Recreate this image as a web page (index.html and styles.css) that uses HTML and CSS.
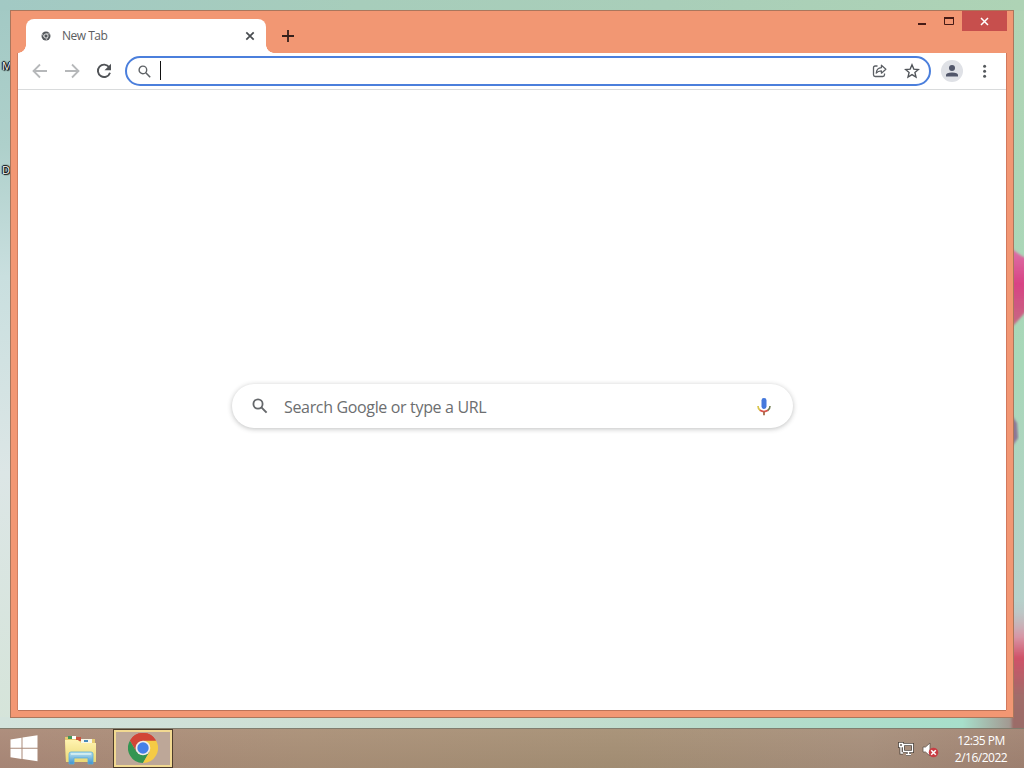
FILE: index.html
```html
<!DOCTYPE html>
<html lang="en">
<head>
<meta charset="utf-8">
<title>New Tab</title>
<link rel="stylesheet" href="styles.css">
</head>
<body>
<div class="desktop">
  <svg class="wallpaper" width="1024" height="728" viewBox="0 0 1024 728">
    <defs>
      <linearGradient id="petal" x1="0" y1="0" x2="0" y2="1"><stop offset="0" stop-color="#dc74aa"/><stop offset=".45" stop-color="#d84385"/><stop offset="1" stop-color="#c36e82"/></linearGradient>
      <linearGradient id="bloom" x1="0" y1="0" x2="0" y2="1"><stop offset="0" stop-color="#b9d0cf" stop-opacity="0"/><stop offset=".3" stop-color="#d895a5"/><stop offset=".45" stop-color="#cf5269"/><stop offset=".72" stop-color="#a16d6a"/><stop offset="1" stop-color="#996c66"/></linearGradient>
      <filter id="soft"><feGaussianBlur stdDeviation="1.2"/></filter>
    </defs>
    <path d="M1010 247 Q1020 256 1028 259 V309 Q1019 320 1010 329Z" fill="url(#petal)" filter="url(#soft)"/>
    <path d="M1011 414 L1017 423 L1018 438 L1011 448Z" fill="#8c7794" filter="url(#soft)"/>
    <path d="M1010 595 H1030 V735 H1012Z" fill="url(#bloom)" filter="url(#soft)"/>
  </svg>
  <span class="shortcut first">M</span>
  <span class="shortcut second">D</span>

  <main class="window">
    <header class="titlebar">
      <div class="tab">
        <svg class="favicon" width="10" height="10" viewBox="0 0 10 10"><circle cx="5" cy="5" r="4.5" fill="#54585c"/><circle cx="5" cy="5" r="2.1" fill="none" stroke="#eee" stroke-width=".9"/><path d="M5 2.9h4M3.1 6L1.3 2.9M6.8 6.1L5 9.2" stroke="#ddd" stroke-width=".7"/></svg>
        <span class="tab-title">New Tab</span>
        <svg class="tab-close" width="10" height="10" viewBox="0 0 10 10"><path d="M1.3 1.3l7.4 7.4M8.7 1.3L1.3 8.7" stroke="#484c50" stroke-width="1.7"/></svg>
      </div>
      <svg class="new-tab" width="12" height="12" viewBox="0 0 12 12"><path d="M6 0v12M0 6h12" stroke="#35201b" stroke-width="1.8"/></svg>
      <div class="controls">
        <svg width="54" height="20" viewBox="0 0 54 20"><path d="M10 13h8" stroke="#461b16" stroke-width="2"/><path d="M36.5 6.5h9v7h-9z" fill="none" stroke="#461b16"/><path d="M36 7h10" stroke="#461b16" stroke-width="2"/></svg>
        <div class="close"><svg width="9" height="9" viewBox="0 0 9 9"><path d="M1 1l7 7M8 1L1 8" stroke="#fff" stroke-width="1.5"/></svg></div>
      </div>
    </header>

    <section class="page">
      <nav class="toolbar">
        <svg class="nav" width="16" height="16" viewBox="0 0 16 16"><path d="M15 8H2M8 1.5L1.5 8 8 14.5" fill="none" stroke="#b6b8ba" stroke-width="1.8"/></svg>
        <svg class="nav" width="16" height="16" viewBox="0 0 16 16"><path d="M1 8h13M8 1.5L14.5 8 8 14.5" fill="none" stroke="#b6b8ba" stroke-width="1.8"/></svg>
        <svg class="nav" width="16" height="16" viewBox="0 0 16 16"><path d="M13.2 4.3A6.2 6.2 0 1 0 14 9.7" fill="none" stroke="#505357" stroke-width="1.9"/><path d="M15 .8v6.5H8.5z" fill="#505357"/></svg>
        <div class="address">
          <svg class="lens" width="13" height="13" viewBox="0 0 13 13"><circle cx="4.9" cy="4.9" r="3.8" fill="none" stroke="#5e6266" stroke-width="1.4"/><path d="M7.8 7.8l4.4 4.4" stroke="#5e6266" stroke-width="1.6"/></svg>
          <span class="caret"></span>
          <svg class="share" width="16" height="14" viewBox="0 0 16 14"><path d="M5.5 2H3.2Q1.5 2 1.5 3.7v7.1q0 1.7 1.7 1.7h7.6q1.7 0 1.7-1.7V9.5" fill="none" stroke="#5b5f64" stroke-width="1.3"/><path d="M4.2 9.2Q4.7 4 9.4 3.7V1.2l4.5 4-4.5 4V6.8Q6.2 6.7 4.2 9.2z" fill="none" stroke="#5b5f64" stroke-width="1.2" stroke-linejoin="round"/></svg>
          <svg class="star" width="16" height="16" viewBox="0 0 16 16"><path d="M8 1.8l1.8 4.3 4.6.4-3.5 3 1.1 4.6-4-2.5-4 2.5 1.1-4.6-3.5-3 4.6-.4z" fill="none" stroke="#505459" stroke-width="1.35"/></svg>
        </div>
        <svg class="avatar" width="22" height="22" viewBox="0 0 22 22"><circle cx="11" cy="11" r="11" fill="#dfe1e6"/><circle cx="11" cy="8" r="3" fill="#51566a"/><path d="M5 16.5v-1.4Q5 12.5 11 12.5t6 2.6v1.4z" fill="#51566a"/></svg>
        <svg class="menu" width="6" height="16" viewBox="0 0 6 16"><g fill="#55595d"><circle cx="2.6" cy="3.3" r="1.5"/><circle cx="2.6" cy="8.3" r="1.5"/><circle cx="2.6" cy="13.3" r="1.5"/></g></svg>
      </nav>
      <div class="content">
        <div class="search">
          <svg width="16" height="16" viewBox="0 0 16 16"><circle cx="6" cy="6" r="4.6" fill="none" stroke="#65686b" stroke-width="1.8"/><path d="M9.4 9.4l5.2 5.2" stroke="#65686b" stroke-width="2"/></svg>
          <span class="prompt">Search Google or type a URL</span>
          <svg class="mic" width="14" height="18" viewBox="0 0 14 18"><rect x="4.5" y="0" width="5" height="11" rx="2.4" fill="#4679dc"/><path d="M1 8q0 3 2.3 4.5" fill="none" stroke="#d8c449" stroke-width="1.7"/><path d="M3 12.3q4 2.6 8 0" fill="none" stroke="#dc514a" stroke-width="1.7"/><path d="M13 8q0 3-2.3 4.5" fill="none" stroke="#6f7b50" stroke-width="1.6"/><path d="M7 13.5v3.7" stroke="#a36b49" stroke-width="1.8"/></svg>
        </div>
      </div>
    </section>
  </main>
</div>

<footer class="taskbar">
  <svg class="start" width="28" height="27" viewBox="0 0 28 27"><path d="M0.5 4.5l11-1.7v10h-11zM12.5 2.6L27.5 .3v12.5h-15zM.5 13.8h11v10.1L.5 22.2zM12.5 13.8h15v12.4l-15-2.1z" fill="#fff"/></svg>
  <svg class="explorer" width="34" height="30" viewBox="0 0 34 30">
    <defs><linearGradient id="folder" x1="0" y1="0" x2="0" y2="1"><stop offset="0" stop-color="#fff3b0"/><stop offset="1" stop-color="#ead875"/></linearGradient><linearGradient id="stand" x1="0" y1="0" x2="0" y2="1"><stop offset="0" stop-color="#c1e5ef"/><stop offset="1" stop-color="#3c92d0"/></linearGradient></defs>
    <path d="M1 2h11l2 2h17v23H2z" fill="#e6cb70"/><path d="M4 1h4v3H4z" fill="#439658"/><path d="M8 1h4v3H8z" fill="#fff"/><path d="M12 2h5v4h-5z" fill="#c8543f"/><path d="M17 4h11v4H17z" fill="#f8f7e8"/><path d="M20 5h4v2h-4z" fill="#4889b9"/>
    <path d="M1 5h13l3 3h15v19H2z" fill="url(#folder)"/>
    <path d="M5 29V19q0-2 2-2h20q2 0 2 2v10h-5v-6H10v6z" fill="url(#stand)" stroke="#5aaedb" stroke-width=".8"/><path d="M7 19h20" stroke="#e8f8f4" stroke-width="1.2"/>
  </svg>
  <div class="task">
    <svg width="30" height="30" viewBox="0 0 30 30"><path d="M2 7.5A15 15 0 0 1 28 7.5L15 15z" fill="#d14537"/><path d="M2 7.5A15 15 0 0 0 15 30l6.5-11.2L8.5 18.7z" fill="#349552"/><path d="M28 7.5A15 15 0 0 1 15 30l6.5-11.2Q23.5 12 15 7.5z" fill="#f5cb45"/><path d="M2 7.5A15 15 0 0 1 28 7.5H15a7.5 7.5 0 0 0-6.5 11.2z" fill="#d14537"/><circle cx="15" cy="15" r="7.3" fill="#f5eee8"/><circle cx="15" cy="15" r="5.7" fill="#4680e8"/></svg>
  </div>
  <div class="tray">
    <svg class="network" width="17" height="16" viewBox="0 0 17 16"><g fill="none" stroke="#4e443c" stroke-width="3"><path d="M5.5 3.5h9v7h-9zM8 13.5h5M10.5 11v2M1.5 2.5h3v3h-3zM3 6v6h2"/></g><g fill="none" stroke="#fff" stroke-width="1.3"><path d="M5.5 3.5h9v7h-9zM8 13.5h5M10.5 11v2M1.5 2.5h3v3h-3zM3 6v6h2"/></g></svg>
    <svg class="volume" width="17" height="16" viewBox="0 0 17 16"><path d="M1 5h2.5L8 1v13L3.5 10H1z" fill="#fff" stroke="#62564c" stroke-width=".8"/><circle cx="11.5" cy="10.5" r="4.8" fill="#c83d43"/><path d="M9.2 8.2l4.6 4.6M13.8 8.2l-4.6 4.6" stroke="#fff" stroke-width="1.5"/></svg>
    <div class="clock"><span class="time">12:35 PM</span><span class="date">2/16/2022</span></div>
  </div>
</footer>
</body>
</html>
```
FILE: styles.css
```css
* { box-sizing: border-box; }
body { margin: 0; width: 1024px; height: 768px; overflow: hidden; display: flex; flex-direction: column; font-family: "Open Sans", "Noto Sans", sans-serif; }
svg { display: block; flex: none; }
.desktop {
  position: relative;
  height: 728px;
  overflow: hidden;
  background:
    linear-gradient(90deg, #d3e3dc 0, #c8ddcf 50%, #b4dccb 75%, #a7dfcb 94%, #a18480 100%) 0 717px / 1024px 11px no-repeat,
    linear-gradient(90deg, #a2c9c4, #a7cdbb 35%, #a9ceb9 65%, #aed3b5) 0 0 / 1024px 11px no-repeat,
    linear-gradient(180deg, #b1d4b5, #a8d8b9 50%, #b6d1c9 80%, #b9cfd3) 1012px 0 / 12px 728px no-repeat,
    linear-gradient(180deg, #a2c9c4 0, #aed0cb 20%, #c9dfdf 38%, #dce6e6 65%, #d5e4d9 100%);
}
.wallpaper { position: absolute; left: 0; top: 0; }
.shortcut { position: absolute; left: 2px; font-size: 11px; line-height: 14px; color: #fff; text-shadow: 0 0 1px #000, 1px 1px 1px #000, 1px 0 2px #000, -1px 0 1px #000, 0 -1px 1px #000; }
.first { top: 59px; }
.second { top: 163px; }
.window { position: absolute; left: 10px; top: 10px; width: 1004px; height: 708px; padding: 0 7px 7px; border: 1px solid #aa765c; background: #f29773; display: flex; flex-direction: column; }
.titlebar { position: relative; z-index: 1; display: flex; height: 42px; padding-left: 8px; }
.tab { position: relative; width: 240px; height: 34px; margin-top: 8px; padding: 0 11px 0 15px; border-radius: 8px 8px 0 0; background: #fff; display: flex; align-items: center; }
.tab::before, .tab::after { content: ""; position: absolute; bottom: 0; width: 8px; height: 8px; }
.tab::before { left: -8px; background: radial-gradient(circle at 0 0, transparent 7.5px, #fff 8px); }
.tab::after { right: -8px; background: radial-gradient(circle at 100% 0, transparent 7.5px, #fff 8px); }
.tab-title { margin-left: 11px; font-size: 12px; line-height: 16px; letter-spacing: -0.5px; color: #5b5d60; }
.tab-close { margin-left: auto; }
.new-tab { margin: 19px 0 0 16px; }
.controls { display: flex; margin: 0 -1px 0 auto; height: 20px; }
.close { width: 45px; height: 20px; background: #c74f4d; display: flex; align-items: center; justify-content: center; }
.page { flex: 1; background: #fff; box-shadow: -1px 0 #d07f61, 1px 0 #d2795e, 0 1px #bd7358; display: flex; flex-direction: column; }
.toolbar { height: 37px; border-bottom: 1px solid #d9dbdc; display: flex; align-items: center; padding: 0 18px 0 14px; }
.nav { margin-right: 16px; }
.address { width: 806px; height: 30px; margin-left: -3px; border: 2px solid #4b7fdc; border-radius: 15px; display: flex; align-items: center; padding: 0 9px 0 11px; }
.caret { width: 1px; height: 19px; margin: 0 auto 2px 9px; background: #111; }
.star { margin-left: 16px; }
.avatar { margin-left: 10px; }
.menu { margin-left: 19px; }
.content { flex: 1; padding: 294px 0 0 214px; }
.search { width: 561px; height: 44px; border-radius: 22px; background: #fff; box-shadow: 0 1px 5px rgba(32,33,36,.29); display: flex; align-items: center; padding: 0 22px 0 20px; }
.prompt { margin: 2px 0 0 16px; font-size: 16px; line-height: 20px; letter-spacing: -0.34px; color: #6c6e70; white-space: nowrap; }
.mic { margin: 2px 0 0 auto; }
.taskbar { height: 40px; border-top: 1px solid #817d6e; background: linear-gradient(180deg, rgba(190,168,145,.25), rgba(145,125,105,.15)), linear-gradient(90deg, #a98677, #a88e76 30%, #a38e73 60%, #a58d7b 85%, #9e7f70); display: flex; align-items: center; padding: 0 15px 0 10px; }
.start { margin: 0 26px 1px 0; }
.explorer { margin-top: 2px; }
.task { width: 60px; height: 39px; margin-left: 15px; padding-bottom: 2px; border: 1px solid #4d3c2c; background: #bda798; box-shadow: inset 0 0 0 2px #f2d991; display: flex; align-items: center; justify-content: center; }
.tray { margin-left: auto; display: flex; align-items: center; }
.volume { margin: 2px 0 0 7px; }
.clock { width: 56px; margin-left: 14px; display: flex; flex-direction: column; align-items: center; color: #fff; font-size: 12px; line-height: 17px; letter-spacing: -0.5px; white-space: nowrap; }
```
